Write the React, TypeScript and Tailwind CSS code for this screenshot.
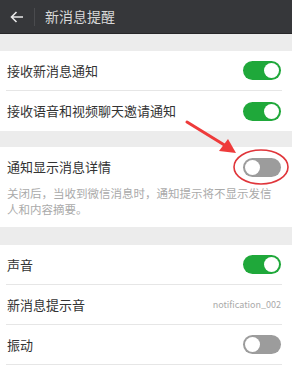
import React from "react"

function Toggle({ on }: { on: boolean }) {
  return (
    <div
      className={`flex h-[19px] w-[38px] items-center rounded-full px-[2px] ${
        on ? "justify-end bg-[#1fa83a]" : "justify-start bg-[#9c9c9c]"
      }`}
    >
      <div className="h-[15px] w-[15px] rounded-full bg-white" />
    </div>
  )
}

function Row({ label, right, divider = true }: { label: string; right: React.ReactNode; divider?: boolean }) {
  return (
    <div className="pl-[6px] pr-[10px]">
      <div className={`flex h-[40px] items-center justify-between pl-[1px] pr-[1px] ${divider ? "border-b border-[#e6e6e6]" : ""}`}>
        <span className="text-[13px] text-[#333]">{label}</span>
        {right}
      </div>
    </div>
  )
}

export default function App() {
  return (
    <div
      className="relative h-[365px] w-[292px] overflow-hidden bg-[#ececec]"
      style={{ fontFamily: '"Noto Sans CJK SC", "Noto Sans", sans-serif' }}
    >
      <div className="flex h-[34px] items-center border-b border-[#262628] bg-[#36373a]">
        <div className="flex w-[34px] items-center justify-center">
          <svg width="14" height="12" viewBox="0 0 14 12" fill="none" stroke="#e8e8e8" strokeWidth="1.6">
            <path d="M13 6H1.5M6.5 1L1.5 6l5 5" />
          </svg>
        </div>
        <div className="h-[18px] w-px bg-[#4a4b4e]" />
        <span className="ml-[10px] text-[14px] text-[#d8d8d8]">新消息提醒</span>
      </div>

      <div className="mt-[17px] bg-white">
        <Row label="接收新消息通知" right={<Toggle on />} />
        <Row label="接收语音和视频聊天邀请通知" right={<Toggle on />} divider={false} />
      </div>

      <div className="mt-[16px] bg-white pb-[10px] pl-[7px] pr-[11px] pt-[2px]">
        <div className="flex h-[36px] items-center justify-between">
          <span className="text-[13px] text-[#333]">通知显示消息详情</span>
          <Toggle on={false} />
        </div>
        <p className="text-[11.5px] leading-[16px] text-[#aaa]">
          关闭后，当收到微信消息时，通知提示将不显示发信人和内容摘要。
        </p>
      </div>

      <div className="mt-[18px] bg-white">
        <Row label="声音" right={<Toggle on />} />
        <Row label="新消息提示音" right={<span className="text-[9px] text-[#aaa]">notification_002</span>} />
        <Row label="振动" right={<Toggle on={false} />} />
      </div>

      <svg className="pointer-events-none absolute left-0 top-0" width="292" height="365" viewBox="0 0 292 365">
        <ellipse cx="261" cy="167" rx="27" ry="17" fill="none" stroke="#e0353a" strokeWidth="1.6" />
        <path d="M187 122 L226 146" stroke="#ee3b3b" strokeWidth="3" strokeLinecap="round" />
        <path d="M236 153 L219 151 L228 139 Z" fill="#ee3b3b" />
      </svg>
    </div>
  )
}
